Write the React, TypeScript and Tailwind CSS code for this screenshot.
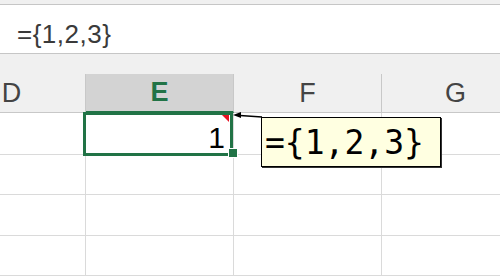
const cols = ["D", "E", "F", "G"];
const rowHeights = ["h-[42px]", "h-[40px]", "h-[41px]", "h-[40px]"];

function HeaderCell({ label }: { label: string }) {
  const active = label === "E";
  return (
    <div
      className={`flex items-center justify-center border-r border-[#c8c8c8] text-[27px] leading-none ${
        active
          ? "bg-[#d3d3d3] border-b-2 border-b-[#217346] font-bold text-[#217346]"
          : "border-b border-b-[#c8c8c8] text-[#444]"
      }`}
    >
      {label}
    </div>
  );
}

export default function App() {
  return (
    <div className="relative w-[500px] h-[277px] overflow-hidden bg-white font-['Liberation_Sans',Arial,sans-serif]">
      {/* ribbon edge */}
      <div className="h-[5px] bg-[#f0f0f0] border-b border-[#c6c6c6]" />

      {/* formula bar */}
      <div className="h-[49px] border-b border-[#c6c6c6] pl-[17px] pt-[16px] text-[26px] leading-none tracking-[0.5px] text-[#3a3a3a]">
        {"={1,2,3}"}
      </div>

      {/* column headers */}
      <div className="bg-[#f0f0f0] pt-[20px]">
        <div className="ml-[-62px] grid h-[39px] grid-cols-[148px_148px_148px_148px]">
          {cols.map((c) => (
            <HeaderCell key={c} label={c} />
          ))}
        </div>
      </div>

      {/* cells */}
      <div className="ml-[-62px]">
        {rowHeights.map((h, r) => (
          <div key={r} className={`grid grid-cols-[148px_148px_148px_148px] ${h}`}>
            {cols.map((c) => (
              <div
                key={c}
                className="flex items-end justify-end border-r border-b border-[#dadada] pr-[8px] pb-[1px] text-[30px] leading-none text-black"
              >
                {r === 0 && c === "E" ? "1" : ""}
              </div>
            ))}
          </div>
        ))}
      </div>

      {/* selection */}
      <div className="absolute left-[83px] top-[112px] h-[44px] w-[150px] border-[3px] border-[#217346]" />
      <div className="absolute left-[228px] top-[148px] h-[10px] w-[10px] border border-white bg-[#217346]" />

      {/* comment indicator */}
      <div className="absolute left-[222px] top-[115px] h-[7px] w-[7px] bg-[#e81123] [clip-path:polygon(0_0,100%_0,100%_100%)]" />

      {/* connector */}
      <svg className="absolute left-[232px] top-[110px]" width="32" height="10" viewBox="0 0 32 10">
        <polygon points="1,5 9,2 9,8" fill="#000" />
        <line x1="8" y1="5.5" x2="30" y2="7" stroke="#000" strokeWidth="1.5" />
      </svg>

      {/* comment box */}
      <div className="absolute left-[261px] top-[117px] flex h-[50px] w-[180px] items-center border border-black bg-[#ffffe1] pl-[3px] font-['DejaVu_Sans_Mono',monospace] text-[33px] leading-none text-black shadow-[1px_1px_0_#333]">
        {"={1,2,3}"}
      </div>
    </div>
  );
}
